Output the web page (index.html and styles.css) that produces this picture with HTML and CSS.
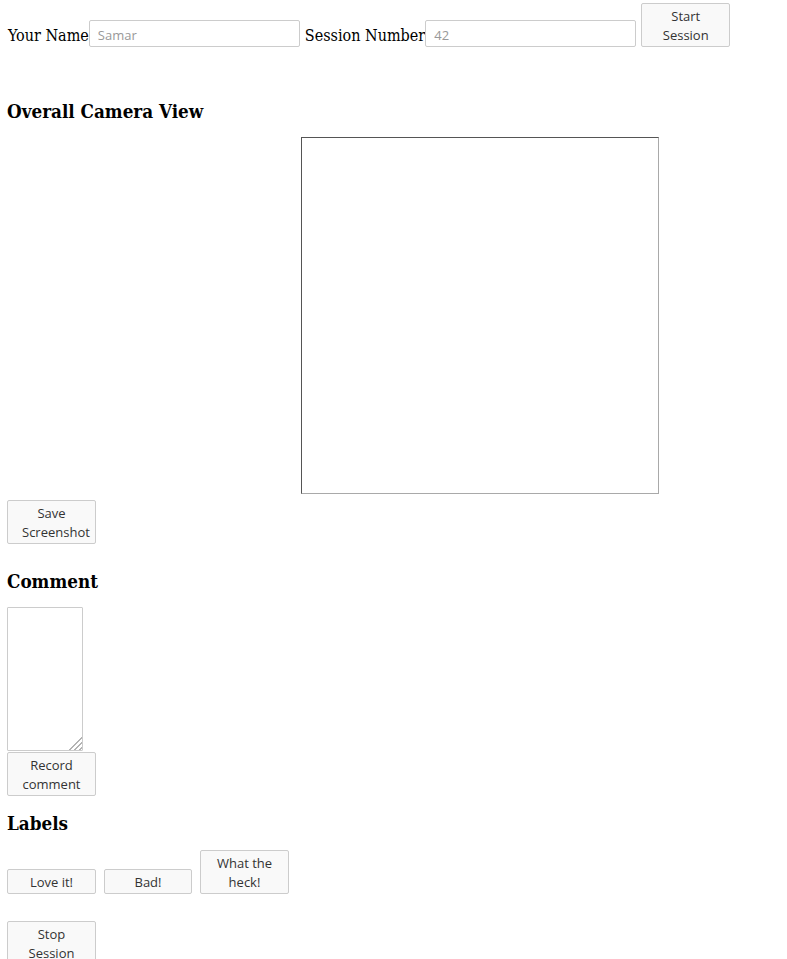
FILE: index.html
```html
<!DOCTYPE html>
<html>
<head>
<meta charset="utf-8">
<title>Session</title>
<link rel="stylesheet" href="styles.css">
</head>
<body>
<div class="page">
  <div class="session-row">
    <span class="label">Your Name</span>
    <input class="field" type="text" placeholder="Samar">
    <span class="label label-gap">Session Number</span>
    <input class="field" type="text" placeholder="42">
    <button class="btn btn-top">Start Session</button>
  </div>

  <h3 class="heading heading-camera">Overall Camera View</h3>
  <div class="camera"></div>
  <button class="btn btn-save">Save Screenshot</button>

  <h3 class="heading heading-comment">Comment</h3>
  <div class="comment-wrap">
    <textarea class="comment-box"></textarea>
  </div>
  <button class="btn btn-record">Record comment</button>

  <h3 class="heading heading-labels">Labels</h3>
  <div class="label-row">
    <button class="btn">Love it!</button>
    <button class="btn btn-narrow">Bad!</button>
    <button class="btn">What the heck!</button>
  </div>
  <button class="btn btn-stop">Stop Session</button>
</div>
</body>
</html>
```

FILE: styles.css
```css
html, body {
  margin: 0;
  padding: 0;
  background: #ffffff;
}

body {
  font-family: "DejaVu Serif Condensed", "DejaVu Serif", serif;
  font-stretch: semi-condensed;
  font-size: 16px;
  color: #000;
}

.page {
  display: flex;
  flex-direction: column;
  align-items: flex-start;
  padding: 3px 7px 0 7px;
}

.session-row {
  display: flex;
  align-items: flex-start;
  height: 44px;
}

.label {
  line-height: 19px;
  margin-top: 23px;
  white-space: nowrap;
  padding-left: 1px;
}

.label-gap {
  margin-left: 4px;
}

.field {
  box-sizing: border-box;
  width: 211px;
  height: 27px;
  margin: 17px 0 0 0;
  padding: 2px 7px 0 8px;
  border: 1px solid #cccccc;
  border-radius: 2px;
  font-family: "Open Sans", sans-serif;
  font-stretch: normal;
  font-size: 13px;
  color: #333;
  background: #fff;
  outline: none;
}

.field::placeholder {
  color: #999999;
}

.btn {
  box-sizing: border-box;
  width: 89px;
  margin: 0;
  padding: 3px 14px 1px 14px;
  border: 1px solid #cccccc;
  border-radius: 2px;
  background: #f9f9f9;
  color: #333333;
  font-family: "Open Sans", sans-serif;
  font-stretch: normal;
  font-size: 13px;
  line-height: 19px;
  text-align: center;
}

.btn-top {
  margin-left: 5px;
}

.btn-narrow {
  width: 88px;
}

.heading {
  margin: 0;
  font-size: 18.72px;
  font-weight: bold;
  line-height: 22px;
}

.heading-camera {
  margin-top: 53px;
}

.camera {
  box-sizing: border-box;
  width: 358px;
  height: 357px;
  margin: 15px 0 0 294px;
  border: 1px solid;
  border-color: #555555 #a9a9a9 #a9a9a9 #555555;
  background: #fff;
}

.btn-save {
  margin-top: 6px;
}

.heading-comment {
  margin-top: 26px;
}

.comment-wrap {
  position: relative;
  display: flex;
  margin-top: 15px;
}

.comment-wrap::after {
  content: "";
  position: absolute;
  right: 1px;
  bottom: 1px;
  width: 13px;
  height: 13px;
  pointer-events: none;
  background:
    linear-gradient(135deg, #ffffff 50%, transparent 50%),
    repeating-linear-gradient(135deg, #ffffff 0 2px, #b3b3b3 2px 3.5px);
}

.comment-box {
  box-sizing: border-box;
  width: 76px;
  height: 144px;
  margin: 0;
  padding: 2px;
  border: 1px solid #cccccc;
  border-radius: 1px;
  background: #fff;
  font-family: "Open Sans", sans-serif;
  font-size: 13px;
  outline: none;
}

.btn-record {
  margin-top: 1px;
}

.heading-labels {
  margin-top: 16px;
}

.label-row {
  display: flex;
  align-items: flex-end;
  gap: 8px;
  margin-top: 16px;
}

.btn-stop {
  margin-top: 27px;
}
```
